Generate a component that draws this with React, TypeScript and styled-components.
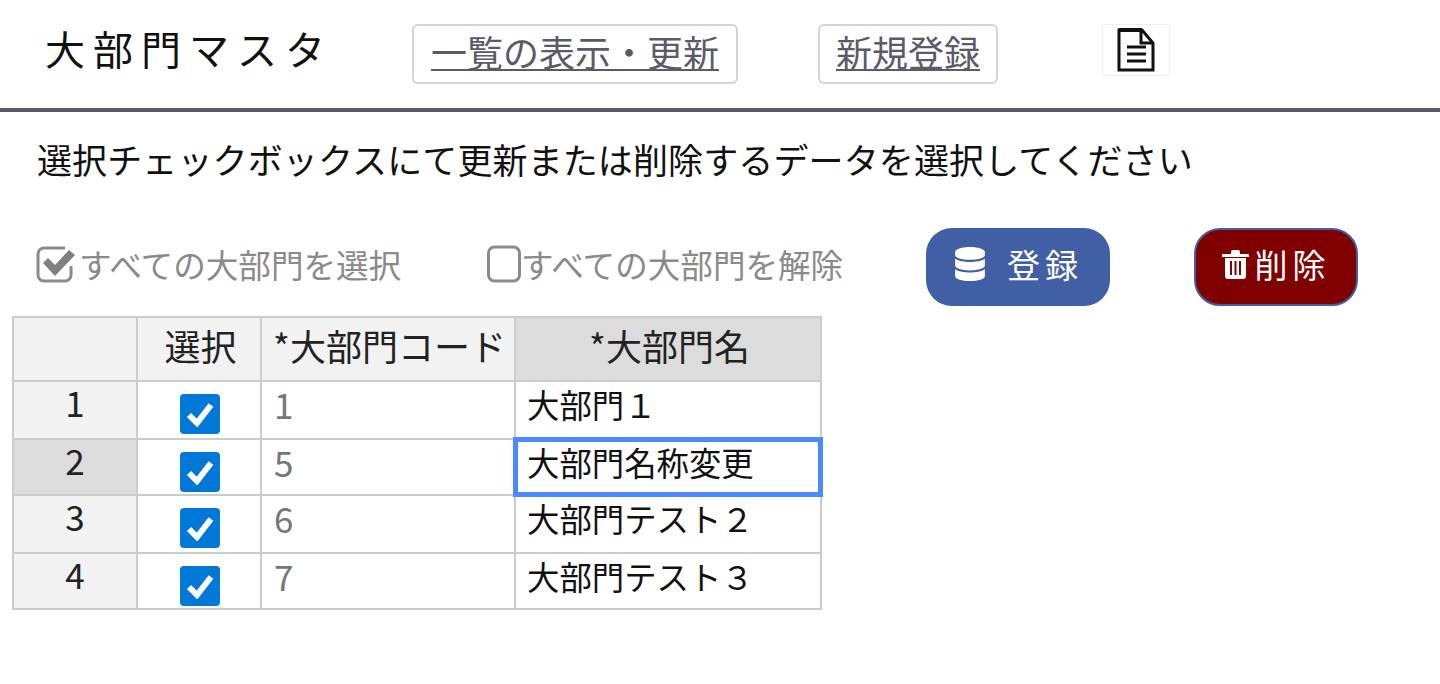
import React from 'react'
import styled, { createGlobalStyle } from 'styled-components'
import { FaDatabase } from 'react-icons/fa'

const GlobalStyle = createGlobalStyle`
  html, body {
    margin: 0;
    padding: 0;
    background: #fff;
    font-family: "Noto Sans CJK JP", "Liberation Sans", sans-serif;
    color: #111;
  }
`

const rows = [
  { no: '1', code: '1', name: '大部門１' },
  { no: '2', code: '5', name: '大部門名称変更', active: true },
  { no: '3', code: '6', name: '大部門テスト２' },
  { no: '4', code: '7', name: '大部門テスト３' },
]

const FileIcon = () => (
  <svg width="38" height="44" viewBox="0 0 38 44">
    <path d="M2 2h23l11 13v27H2z" fill="#fff" stroke="#111" strokeWidth="3" />
    <path d="M2 2h23" stroke="#111" strokeWidth="4" />
    <path d="M24 2v13h12" fill="none" stroke="#111" strokeWidth="3" />
    <path d="M10 19h19M10 26h19M10 33h19" stroke="#111" strokeWidth="3" />
  </svg>
)

const TrashIcon = () => (
  <svg width="27" height="30" viewBox="0 0 27 30">
    <path d="M9 5V3a2 2 0 0 1 2-2h5a2 2 0 0 1 2 2v2h8a1 1 0 0 1 1 1v2H0V6a1 1 0 0 1 1-1z" fill="#fff" />
    <path
      fillRule="evenodd"
      d="M3 9h21v18a3 3 0 0 1-3 3H6a3 3 0 0 1-3-3zM8 12v14h2V12zM12.5 12v14h2V12zM17 12v14h2V12z"
      fill="#fff"
    />
  </svg>
)

const CheckedSquare = () => (
  <svg width="40" height="38" viewBox="0 0 40 38">
    <path
      d="M29 3H8a6 6 0 0 0-6 6v21a6 6 0 0 0 6 6h21a6 6 0 0 0 6-6V21"
      fill="none"
      stroke="#8a8a8a"
      strokeWidth="3"
    />
    <path d="M7 18l5-5 7 7L33 5l6 5-20 21z" fill="#808080" />
  </svg>
)

const EmptySquare = () => (
  <svg width="34" height="38" viewBox="0 0 34 38">
    <rect x="1.5" y="2" width="31" height="34" rx="6" fill="none" stroke="#8a8a8a" strokeWidth="3" />
  </svg>
)

const TickBox = () => (
  <Tick>
    <svg width="28" height="26" viewBox="0 0 28 26">
      <path d="M3 14l8 8L25 4" fill="none" stroke="#fff" strokeWidth="6" />
    </svg>
  </Tick>
)

export default function App() {
  return (
    <>
      <GlobalStyle />
      <Header>
        <Title>大部門マスタ</Title>
        <NavLink $width={326} $mr={80}>一覧の表示・更新</NavLink>
        <NavLink $width={180} $mr={104}>新規登録</NavLink>
        <IconLink><FileIcon /></IconLink>
      </Header>
      <Guide>選択チェックボックスにて更新または削除するデータを選択してください</Guide>
      <Toolbar>
        <BulkLabel $width={451} $gap={3}><CheckedSquare />すべての大部門を選択</BulkLabel>
        <BulkLabel $width={439} $gap={0}><EmptySquare />すべての大部門を解除</BulkLabel>
        <ActionButton $bg="#415fa5" $width={184} $gap={20} $mr={84}><FaDatabase size={34} />登録</ActionButton>
        <ActionButton $bg="#800000" $width={164} $gap={6} $outlined><TrashIcon />削除</ActionButton>
      </Toolbar>
      <Grid>
        <colgroup>
          <col width={124} />
          <col width={124} />
          <col width={254} />
          <col width={306} />
        </colgroup>
        <thead>
          <tr>
            <HeadCell />
            <HeadCell>選択</HeadCell>
            <HeadCell>*大部門コード</HeadCell>
            <HeadCell $current>*大部門名</HeadCell>
          </tr>
        </thead>
        <tbody>
          {rows.map((row) => (
            <tr key={row.no}>
              <RowNo $current={row.active}>{row.no}</RowNo>
              <TickCell><TickBox /></TickCell>
              <CodeCell>{row.code}</CodeCell>
              <NameCell $active={row.active}>{row.name}</NameCell>
            </tr>
          ))}
        </tbody>
      </Grid>
    </>
  )
}

const Header = styled.header`
  display: flex;
  align-items: flex-start;
  height: 84px;
  padding: 24px 0 0 45px;
  border-bottom: 4px solid #5a5a69;
`

const Title = styled.h1`
  width: 367px;
  margin: 0;
  font-size: 40px;
  line-height: 48px;
  font-weight: 400;
  letter-spacing: 8px;
  white-space: nowrap;
`

const NavLink = styled.a<{ $width: number; $mr: number }>`
  box-sizing: border-box;
  width: ${(p) => p.$width}px;
  height: 60px;
  margin-right: ${(p) => p.$mr}px;
  border: 2px solid #d4d4d4;
  border-radius: 6px;
  font-size: 36px;
  line-height: 50px;
  text-align: center;
  color: #5a5a69;
  text-decoration: underline;
  text-decoration-thickness: 2px;
  text-underline-offset: 2px;
  white-space: nowrap;
`

const IconLink = styled.a`
  box-sizing: border-box;
  width: 68px;
  height: 52px;
  border: 1px solid #eee;
  border-radius: 4px;
  display: flex;
  align-items: center;
  justify-content: center;
`

const Guide = styled.p`
  margin: 0;
  padding: 24px 0 0 37px;
  font-size: 35px;
  letter-spacing: 0.12px;
  line-height: 46px;
  white-space: nowrap;
`

const Toolbar = styled.div`
  display: flex;
  align-items: flex-start;
  padding: 46px 0 0 36px;
  height: 78px;
`

const BulkLabel = styled.label<{ $width: number; $gap: number }>`
  display: flex;
  align-items: center;
  width: ${(p) => p.$width}px;
  height: 71px;
  gap: ${(p) => p.$gap}px;
  font-size: 32.6px;
  line-height: 38px;
  color: #8a8a8a;
  white-space: nowrap;
  & > svg { flex: none; }
`

const ActionButton = styled.button<{ $bg: string; $width: number; $gap: number; $mr?: number; $outlined?: boolean }>`
  box-sizing: border-box;
  display: flex;
  align-items: center;
  justify-content: center;
  gap: ${(p) => p.$gap}px;
  width: ${(p) => p.$width}px;
  height: 78px;
  margin-right: ${(p) => p.$mr ?? 0}px;
  padding: 0 0 7px;
  border: ${(p) => (p.$outlined ? '2px solid #415fa5' : 'none')};
  border-radius: 26px;
  background: ${(p) => p.$bg};
  color: #fff;
  font-family: inherit;
  font-size: 33px;
  letter-spacing: 5px;
`

const Grid = styled.table`
  margin: 10px 0 0 12px;
  width: 809px;
  table-layout: fixed;
  border-collapse: collapse;
  font-size: 32.4px;
  line-height: 40px;
  td, th { border: 2px solid #ccc; padding: 0; vertical-align: top; }
  tbody tr:nth-child(odd) td { height: 56px; }
  tbody tr:nth-child(even) td { height: 54px; }
`

const HeadCell = styled.th<{ $current?: boolean }>`
  height: 62px;
  background: ${(p) => (p.$current ? '#dcdcdc' : '#f2f2f2')};
  font-size: 36px;
  font-weight: 400;
  line-height: 54px;
  text-align: center;
  color: #222;
  white-space: nowrap;
  && { padding-left: 3px; }
`

const RowNo = styled.td<{ $current?: boolean }>`
  background: ${(p) => (p.$current ? '#dcdcdc' : '#f2f2f2')};
  font-size: 35px;
  line-height: 40px;
  text-align: center;
  color: #222;
`

const TickCell = styled.td`
  && { padding-left: 2px; }
`

const Tick = styled.span`
  display: flex;
  align-items: center;
  justify-content: center;
  width: 40px;
  height: 40px;
  margin: 12px auto 0;
  border-radius: 4px;
  background: #0078d7;
`

const CodeCell = styled.td`
  font-size: 35px;
  line-height: 44px;
  color: #777;
  && { padding-left: 12px; }
`

const NameCell = styled.td<{ $active?: boolean }>`
  line-height: 44px;
  white-space: nowrap;
  && { padding-left: 11px; }
  ${(p) => p.$active && 'outline: 5px solid #4b89ff; outline-offset: -3px;'}
`
